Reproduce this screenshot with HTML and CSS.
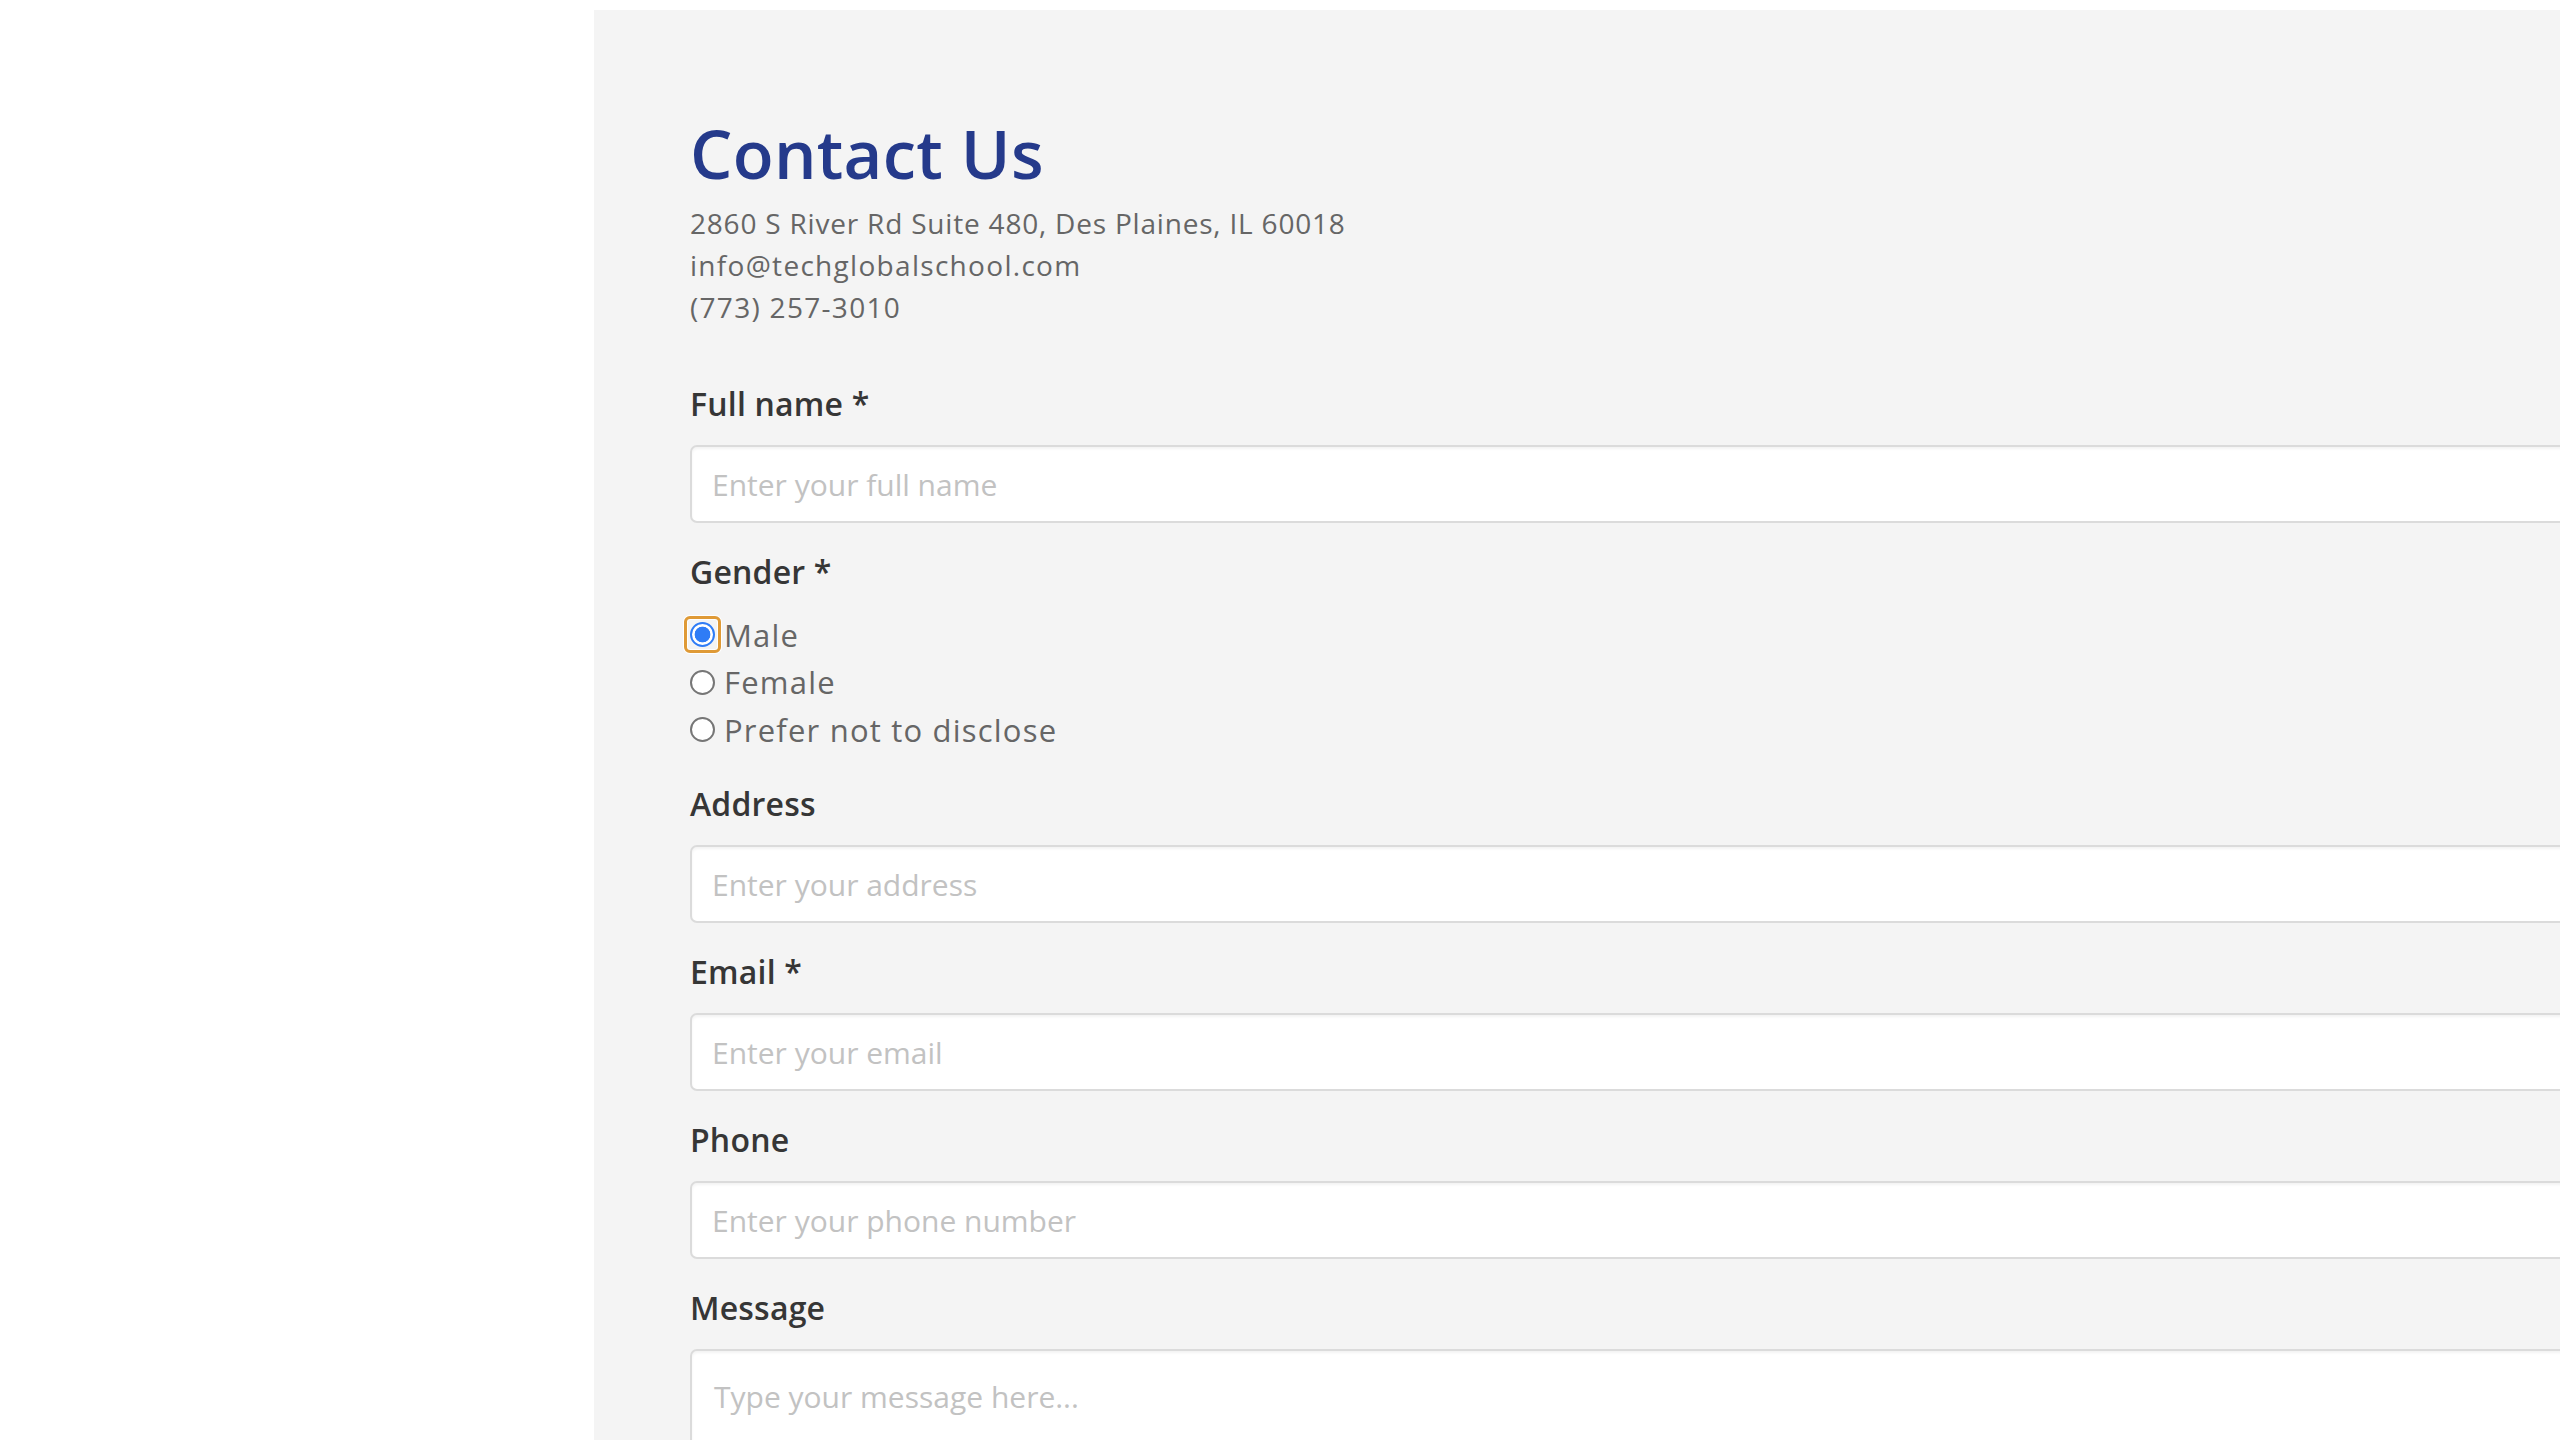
FILE: index.html
```html
<!DOCTYPE html>
<html lang="en">
<head>
<meta charset="utf-8">
<title>Contact Us</title>
<link rel="stylesheet" href="styles.css">
</head>
<body>
<main class="page">
  <section class="panel">
    <h1 class="title">Contact Us</h1>
    <div class="contact-info">
      <p>2860 S River Rd Suite 480, Des Plaines, IL 60018</p>
      <p class="wide">info@techglobalschool.com</p>
      <p class="wide">(773) 257-3010</p>
    </div>
    <form class="form">
      <div class="field">
        <label class="label" for="full-name">Full name *</label>
        <input class="input" id="full-name" type="text" placeholder="Enter your full name">
      </div>
      <div class="field field-gender">
        <span class="label label-gender">Gender *</span>
        <div class="radios">
          <label class="radio"><input class="radio-input" type="radio" name="gender" checked><span class="radio-mark is-checked is-focused"></span>Male</label>
          <label class="radio"><input class="radio-input" type="radio" name="gender"><span class="radio-mark"></span>Female</label>
          <label class="radio"><input class="radio-input" type="radio" name="gender"><span class="radio-mark"></span>Prefer not to disclose</label>
        </div>
      </div>
      <div class="field">
        <label class="label" for="address">Address</label>
        <input class="input" id="address" type="text" placeholder="Enter your address">
      </div>
      <div class="field">
        <label class="label" for="email">Email *</label>
        <input class="input" id="email" type="email" placeholder="Enter your email">
      </div>
      <div class="field">
        <label class="label" for="phone">Phone</label>
        <input class="input" id="phone" type="tel" placeholder="Enter your phone number">
      </div>
      <div class="field">
        <label class="label" for="message">Message</label>
        <textarea class="textarea" id="message" placeholder="Type your message here..."></textarea>
      </div>
    </form>
  </section>
</main>
</body>
</html>
```

FILE: styles.css
```css
html {
  overflow: hidden;
}

body {
  margin: 0;
  background: #ffffff;
  font-family: "Open Sans", "Liberation Sans", sans-serif;
}

.page {
  width: 2560px;
  height: 1440px;
  overflow: hidden;
}

.panel {
  box-sizing: border-box;
  margin: 10px 0 0 594px;
  width: 2200px;
  min-height: 1600px;
  padding: 110px 0 0 96px;
  background: #f4f4f4;
}

.title {
  margin: 0;
  font-size: 67px;
  line-height: 67px;
  font-weight: 600;
  letter-spacing: 0.3px;
  color: #253a8b;
}

.contact-info {
  margin-top: 15px;
  font-size: 28px;
  line-height: 42px;
  letter-spacing: 0.8px;
  color: #666666;
}

.contact-info p {
  margin: 0;
}

.contact-info .wide {
  letter-spacing: 1.3px;
}

.form {
  margin-top: 55px;
  width: 1950px;
}

.field {
  margin-bottom: 28px;
}

.label {
  display: block;
  padding-top: 0.5px;
  margin-bottom: 21.5px;
  font-size: 32px;
  line-height: 40px;
  font-weight: 600;
  letter-spacing: 0.2px;
  color: #363636;
}

.field-gender {
  margin-bottom: 29.5px;
}

.label-gender {
  margin-bottom: 19.5px;
}

.input,
.textarea {
  display: block;
  box-sizing: border-box;
  width: 100%;
  margin: 0;
  border: 2px solid #dbdbdb;
  border-radius: 7px;
  background: #ffffff;
  box-shadow: inset 0 2px 3px rgba(10, 10, 10, 0.05);
  font-family: "Open Sans", "Liberation Sans", sans-serif;
  font-size: 30px;
  color: #363636;
  outline: none;
}

.input {
  height: 78px;
  padding: 0 20px;
}

.textarea {
  height: 320px;
  padding: 23px 22px;
  line-height: 45px;
  resize: none;
}

.input::placeholder,
.textarea::placeholder {
  color: #c2c2c2;
  opacity: 1;
}

.radios {
  display: flex;
  flex-direction: column;
}

.radio {
  display: flex;
  align-items: center;
  height: 47.5px;
  font-size: 31px;
  letter-spacing: 1.2px;
  color: #666666;
}

.radio-input {
  position: absolute;
  opacity: 0;
  width: 0;
  height: 0;
  margin: 0;
}

.radio-mark {
  position: relative;
  box-sizing: border-box;
  flex: none;
  width: 25px;
  height: 25px;
  margin: 0 9px 0 0;
  border: 2px solid #767676;
  border-radius: 50%;
  background: #ffffff;
}

.radio-mark.is-checked {
  border-color: #2f7cf6;
  background: radial-gradient(circle closest-side, #2f7cf6 0 72%, #ffffff 78%);
}

.radio-mark.is-focused::after {
  content: "";
  position: absolute;
  left: -8px;
  top: -8px;
  right: -8px;
  bottom: -8px;
  border: 3px solid #df9a36;
  border-radius: 6px;
  box-shadow: 0 0 0 1px #ffffff, inset 0 0 0 1px #ffffff;
}
```
